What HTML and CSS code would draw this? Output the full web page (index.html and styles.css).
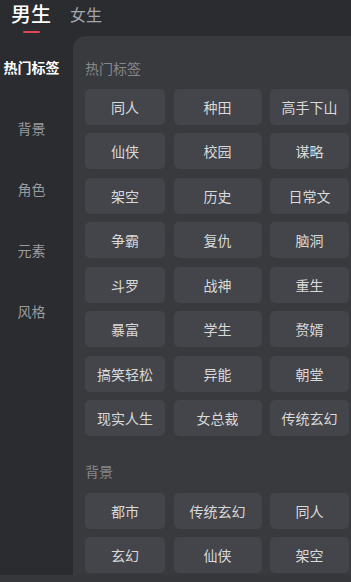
FILE: index.html
```html
<!DOCTYPE html>
<html lang="zh">
<head>
<meta charset="utf-8">
<link rel="stylesheet" href="styles.css">
</head>
<body>
<div class="page">
  <div class="tabs">
    <div class="tab active"><span class="tab-text">男生</span><span class="tab-bar"></span></div>
    <div class="tab"><span class="tab-text">女生</span></div>
  </div>
  <div class="main">
    <div class="sidebar">
      <div class="side-item active">热门标签</div>
      <div class="side-item">背景</div>
      <div class="side-item">角色</div>
      <div class="side-item">元素</div>
      <div class="side-item">风格</div>
    </div>
    <div class="panel">
      <div class="section">
        <div class="section-title">热门标签</div>
        <div class="grid">
          <div class="chip">同人</div><div class="chip">种田</div><div class="chip">高手下山</div>
          <div class="chip">仙侠</div><div class="chip">校园</div><div class="chip">谋略</div>
          <div class="chip">架空</div><div class="chip">历史</div><div class="chip">日常文</div>
          <div class="chip">争霸</div><div class="chip">复仇</div><div class="chip">脑洞</div>
          <div class="chip">斗罗</div><div class="chip">战神</div><div class="chip">重生</div>
          <div class="chip">暴富</div><div class="chip">学生</div><div class="chip">赘婿</div>
          <div class="chip">搞笑轻松</div><div class="chip">异能</div><div class="chip">朝堂</div>
          <div class="chip">现实人生</div><div class="chip">女总裁</div><div class="chip">传统玄幻</div>
        </div>
      </div>
      <div class="section second">
        <div class="section-title">背景</div>
        <div class="grid">
          <div class="chip">都市</div><div class="chip">传统玄幻</div><div class="chip">同人</div>
          <div class="chip">玄幻</div><div class="chip">仙侠</div><div class="chip">架空</div>
        </div>
      </div>
    </div>
  </div>
  <div class="bottom"></div>
</div>
</body>
</html>
```
FILE: styles.css
```css
* { box-sizing: border-box; }
html, body {
  margin: 0;
  padding: 0;
  background: #2b2c30;
  font-family: "Noto Sans CJK SC", "Noto Sans", sans-serif;
}
.page {
  width: 351px;
  height: 582px;
  overflow: hidden;
  display: flex;
  flex-direction: column;
}
.tabs {
  height: 36px;
  padding: 2px 0 0 11px;
  display: flex;
  align-items: flex-start;
  gap: 19px;
  flex-shrink: 0;
}
.tab {
  display: flex;
  flex-direction: column;
  align-items: center;
}
.tab-text {
  line-height: 24px;
  font-size: 16px;
  color: #a4a5a8;
}
.tab.active .tab-text {
  font-size: 20px;
  color: #ffffff;
  font-weight: 500;
}
.tab-bar {
  width: 17px;
  height: 2px;
  margin-top: 5px;
  border-radius: 1px;
  background: #e4464f;
}
.main {
  display: flex;
  height: 539px;
  flex-shrink: 0;
  overflow: hidden;
}
.sidebar {
  width: 73px;
  flex-shrink: 0;
  padding: 1px 10px 0 0;
}
.side-item {
  height: 61px;
  line-height: 61px;
  text-align: center;
  font-size: 14px;
  color: #9a9b9e;
}
.side-item.active {
  color: #ffffff;
  font-weight: 700;
}
.panel {
  flex: 1;
  background: #383a3e;
  border-top-left-radius: 13px;
  padding: 22px 0 0 12px;
  overflow: hidden;
}
.section-title {
  height: 20px;
  line-height: 20px;
  font-size: 14px;
  color: #86878a;
  margin-bottom: 11px;
}
.section.second {
  margin-top: 25px;
}
.section.second .section-title {
  margin-bottom: 12px;
}
.grid {
  display: grid;
  grid-template-columns: 80px 88px 79px;
  grid-auto-rows: 36px;
  column-gap: 8.5px;
  row-gap: 8.43px;
}
.section.second .grid {
  row-gap: 8px;
}
.chip {
  background: #43454a;
  border-radius: 5px;
  display: flex;
  align-items: center;
  justify-content: center;
  font-size: 14px;
  color: #d9d9da;
  white-space: nowrap;
}
.bottom {
  flex: 1;
  background: #35373b;
}
```
